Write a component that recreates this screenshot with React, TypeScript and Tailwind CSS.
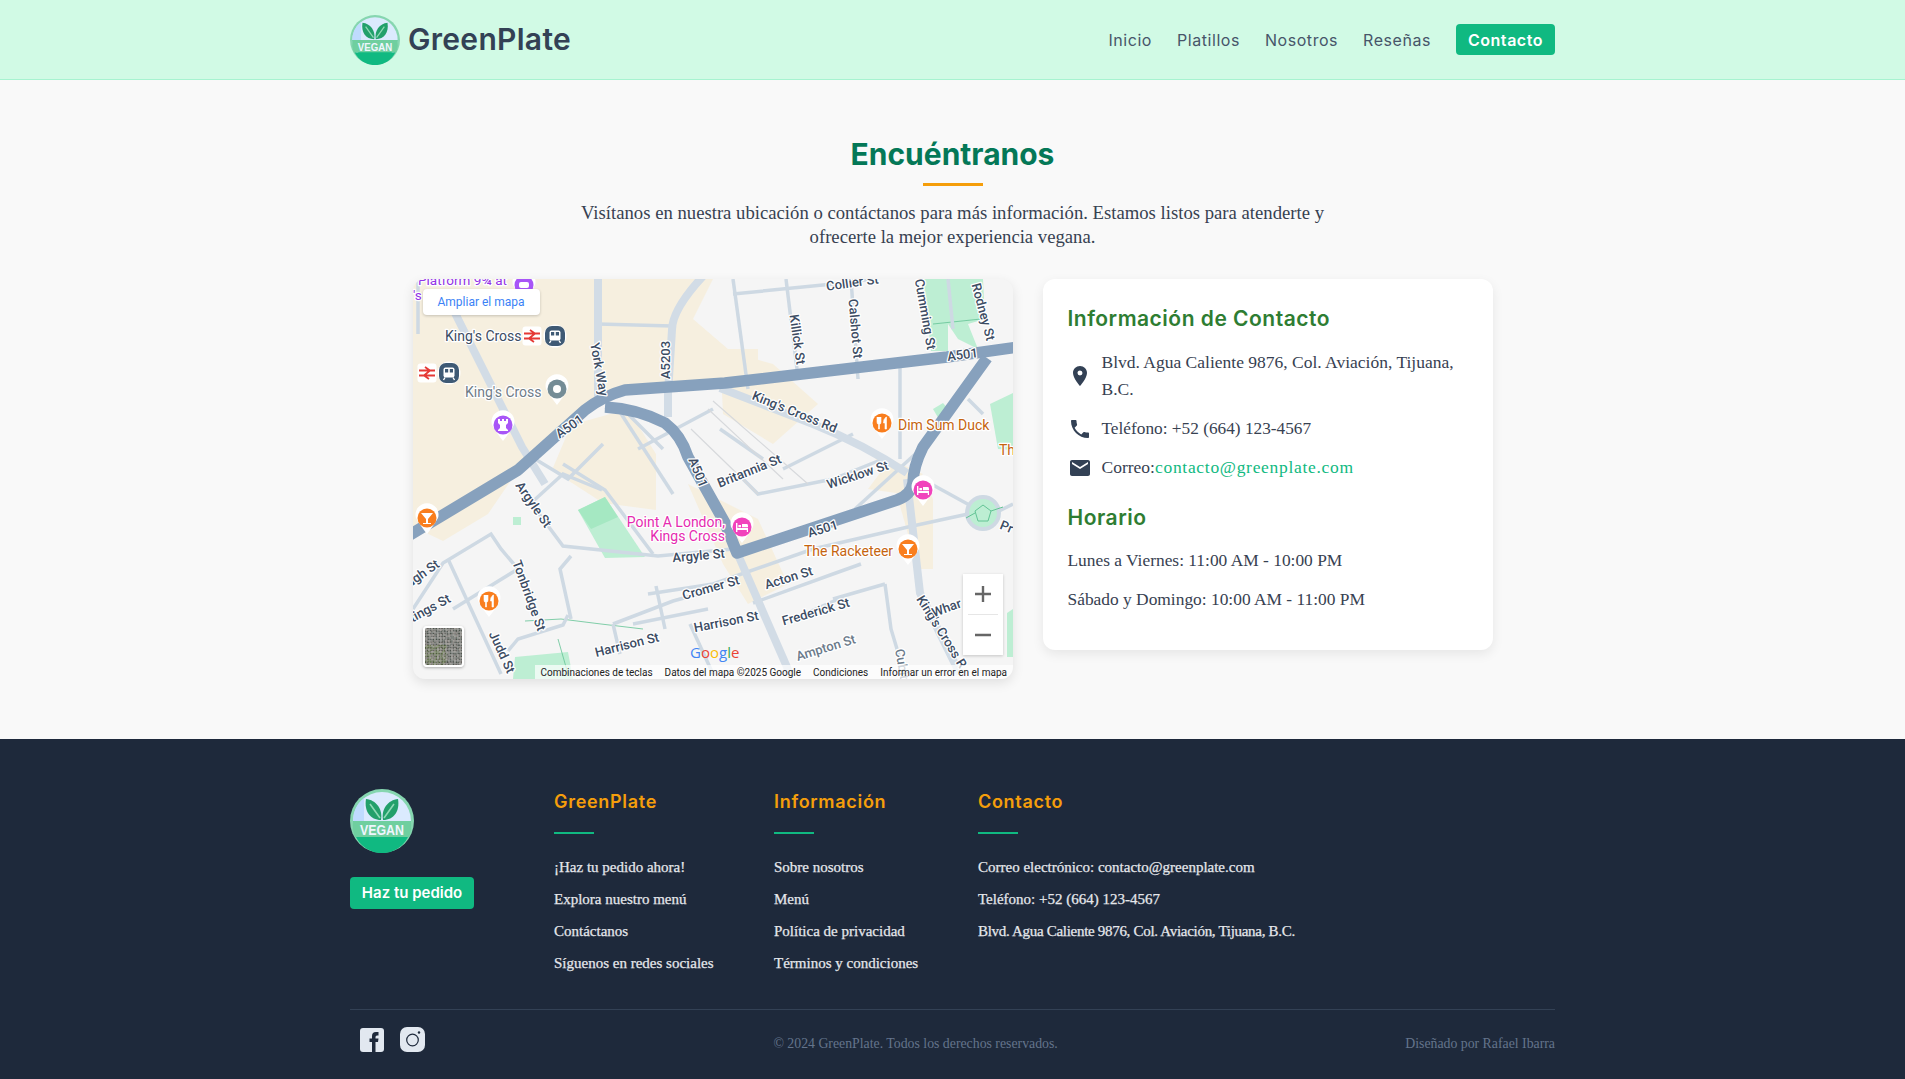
import { MdLocationOn, MdPhone, MdEmail } from 'react-icons/md'

const sans = "font-['Inter',sans-serif]"
const serif = "font-['Liberation_Serif',serif]"

const navLinks = ['Inicio', 'Platillos', 'Nosotros', 'Reseñas']

function VeganLogo({ size }: { size: number }) {
  return (
    <svg width={size} height={size} viewBox="0 0 64 64" className="shrink-0">
      <circle cx="32" cy="32" r="32" fill="#86d6b0" />
      <circle cx="32" cy="32" r="29" fill="#dbeafe" />
      <path d="M3 32 A29 29 0 0 1 14 9 L14 32 Z" fill="#bfdbfe" />
      <path d="M3.2 32 H60.8 A29 29 0 0 1 3.2 32 Z" fill="#10b981" />
      <path d="M3.2 32 H60.8 A29 29 0 0 1 59 48 H5 A29 29 0 0 1 3.2 32 Z" fill="#6fcf9f" />
      <path d="M6 48 H58 A29 29 0 0 1 6 48 Z" fill="#10b981" />
      <path d="M31 31 C20 31 14 22 16 10 C26 11 33 20 31 31 Z" fill="#22a06b" />
      <path d="M33 31 C44 31 50 22 48 10 C38 11 31 20 33 31 Z" fill="#22a06b" />
      <path d="M30 29 L20 15 M34 29 L44 15" stroke="#8ed9b5" strokeWidth="1.6" fill="none" />
      <text x="32" y="46" textAnchor="middle" fontSize="14" fontWeight="700" fill="#eff6ff" className="font-['Liberation_Sans',sans-serif]" textLength="44" lengthAdjust="spacingAndGlyphs">VEGAN</text>
    </svg>
  )
}

type Label = { t: string; x: number; y: number; r?: number; c?: string; s?: number; a?: 'start' | 'middle' | 'end' }

const labels: Label[] = [
  { t: 'York Way', x: 182, y: 91, r: 80 },
  { t: 'A5203', x: 257, y: 81, r: -90 },
  { t: 'A501', x: 159, y: 151, r: -35 },
  { t: 'A501', x: 281, y: 195, r: 68 },
  { t: 'Collier St', x: 440, y: 8, r: -8 },
  { t: 'Killick St', x: 380, y: 61, r: 82 },
  { t: 'Calshot St', x: 438, y: 50, r: 85 },
  { t: 'Cumming St', x: 508, y: 36, r: 80 },
  { t: 'Rodney St', x: 566, y: 34, r: 75 },
  { t: 'A501', x: 550, y: 80, r: -7 },
  { t: "King's Cross Rd", x: 380, y: 137, r: 22 },
  { t: 'Britannia St', x: 338, y: 196, r: -22 },
  { t: 'Wicklow St', x: 446, y: 200, r: -18 },
  { t: 'A501', x: 411, y: 254, r: -17 },
  { t: 'Argyle St', x: 286, y: 281, r: -5 },
  { t: 'Argyle St', x: 117, y: 228, r: 55 },
  { t: 'Tonbridge St', x: 112, y: 318, r: 70 },
  { t: 'Judd St', x: 85, y: 375, r: 65 },
  { t: 'ugh St', x: 12, y: 298, r: -35 },
  { t: 'tings St', x: 19, y: 333, r: -28 },
  { t: 'Cromer St', x: 299, y: 313, r: -16 },
  { t: 'Acton St', x: 377, y: 303, r: -17 },
  { t: 'Harrison St', x: 215, y: 370, r: -14 },
  { t: 'Harrison St', x: 314, y: 347, r: -11 },
  { t: 'Frederick St', x: 404, y: 337, r: -16 },
  { t: 'Ampton St', x: 414, y: 373, r: -17, c: '#6b7a8a' },
  { t: "King's Cross R", x: 525, y: 355, r: 58 },
  { t: 'Whar', x: 535, y: 333, r: -20 },
  { t: 'Cubitt', x: 485, y: 388, r: 80, c: '#6b7a8a' },
  { t: 'Pr', x: 592, y: 252, r: 22 },
  { t: "King's Cross", x: 32, y: 62, a: 'start', s: 14, c: '#3c4c63' },
  { t: "King's Cross", x: 52, y: 118, a: 'start', s: 14, c: '#6f7c88' },
  { t: 'Platform 9¾ at', x: 5, y: 6, a: 'start', s: 13.5, c: '#9334e6' },
  { t: "'s", x: 0, y: 21, a: 'start', s: 13.5, c: '#9334e6' },
  { t: 'Dim Sum Duck', x: 485, y: 151, a: 'start', s: 14, c: '#c5640f' },
  { t: 'Th', x: 586, y: 176, a: 'start', s: 14, c: '#c5640f' },
  { t: 'The Racketeer', x: 391, y: 277, a: 'start', s: 14, c: '#c5640f' },
  { t: 'Point A London,', x: 312, y: 248, a: 'end', s: 14, c: '#e52bb0' },
  { t: 'Kings Cross', x: 312, y: 262, a: 'end', s: 14, c: '#e52bb0' },
]

const motorway = [
  'M-5 257 L105 191 L172 131 Q190 117 212 111 L312 104 L534 78 L605 68',
  'M192 128 Q225 130 252 144 Q268 156 275 178 L312 244 L324 274 L484 221 Q498 216 500 204 Q500 188 510 168 L574 79',
]

const wideRoads = [
  'M307 109 L400 145 Q450 165 494 194',
  'M185 -5 L185 118',
  'M292 -5 Q259 30 259 51 L255 114 L255 138',
  'M40 30 L109 168 L132 205',
  'M494 200 L507 314 L547 395',
  'M326 278 L377 395',
]

const thinRoads = [
  'M5 0 L5 55', 'M0 330 L30 284 L78 255 L88 270 L105 290',
  'M35 280 L88 395', 'M105 290 L40 330', 'M115 220 L150 267 L245 277 L320 270',
  'M189 211 L150 195 L117 225', 'M150 185 L192 211 L240 275',
  'M235 315 L300 305 L400 270 L495 248 L555 235',
  'M200 345 L260 322 L300 311',
  'M200 345 L207 375', 'M155 336 L150 346 L105 360 L95 372',
  'M158 277 L147 290 L158 340', 'M243 307 L252 350', 'M277 345 L300 395',
  'M220 345 L295 330',
  'M340 324 L420 295 L448 285', 'M430 318 L380 340', 'M472 305 L478 350 L490 390',
  'M472 305 L420 320',
  'M185 45 L259 47', 'M320 0 L335 110', 'M320 15 L420 5 L460 0', 'M373 0 L384 90', 'M438 0 L445 100',
  'M442 230 L510 168', 'M535 0 L540 50', 'M487 80 L487 180',
  'M330 200 L345 215 L420 200 L470 180', 'M370 190 L440 155',
  'M350 180 L307 150', 'M500 195 L560 228', 'M250 170 L215 135 L192 128',
  'M205 130 L260 215', 'M225 170 L300 130', 'M122 180 L155 200 L190 165',
  'M555 120 L570 135', 'M570 240 L600 225',
]

const beige = [
  'M0 0 L300 0 L280 40 L315 70 L345 70 L345 104 L215 112 L172 131 L105 191 L10 250 L0 250 Z',
  'M5 250 L105 191 L75 235 L30 262 Z',
  'M158 146 L215 130 L243 175 L243 231 L190 224 L139 191 Z',
  'M307 70 L360 85 L405 125 L360 165 L310 135 Z',
  'M455 170 L510 195 L505 200 L490 215 L455 210 L470 190 Z',
  'M275 205 L345 240 L375 305 L335 325 L310 285 Z',
  'M505 190 L520 220 L520 290 L505 290 L485 220 Z',
]

const parks = [
  'M165 231 L192 218 L232 278 L192 279 Z',
  'M510 0 L570 0 L572 40 L555 45 L565 70 L545 60 L535 45 L535 72 L518 72 Z',
  'M577 125 L600 114 L600 171 L585 170 Z',
  'M100 238 L108 238 L108 246 L100 246 Z',
  'M520 130 L530 124 L537 132 L527 142 Z',
  'M102 378 L155 373 L160 400 L100 400 Z',
  'M594 334 L600 330 L600 378 L594 378 Z',
]

function Pin({ x, y, fill, kind }: { x: number; y: number; fill: string; kind: string }) {
  return (
    <g transform={`translate(${x} ${y})`}>
      <path d="M-11 0 A11.5 11.5 0 1 1 11 0 Q7 7 0 16 Q-7 7 -11 0 Z" fill="#fff" />
      <circle r="9.5" fill={fill} />
      {kind === 'cocktail' && <path d="M-6 -5 H6 L1 1 V5 H4 V6 H-4 V5 H-1 V1 Z" fill="#fff" />}
      {kind === 'food' && <path d="M-5 -6 V-1 Q-5 1 -3.5 1.5 V6 H-2.5 V1.5 Q-1 1 -1 -1 V-6 M-3 -6 V-1 M4 -6 Q1.5 -4 1.5 0 H3 V6 H4.5 V-6 Z" fill="#fff" stroke="#fff" strokeWidth=".6" />}
      {kind === 'hotel' && <path d="M-6 -4 H-4.6 V1 H6 V5 H4.8 V3 H-4.6 V5 H-6 Z M-3.6 -2 H-1 V0.2 H-3.6 Z M0 -3 H5 Q6 -3 6 -1 V0.2 H0 Z" fill="#fff" />}
      {kind === 'rook' && <path d="M-5 -6 H-3 V-4 H-1 V-6 H1 V-4 H3 V-6 H5 V-2 L3 0 V3 L5 5 V6 H-5 V5 L-3 3 V0 L-5 -2 Z" fill="#fff" />}
      {kind === 'dot' && <circle r="4" fill="#fff" />}
      {kind === 'game' && <rect x="-5" y="-3" width="10" height="6" rx="2" fill="#fff" />}
    </g>
  )
}

function Train({ x, y }: { x: number; y: number }) {
  return (
    <g transform={`translate(${x} ${y})`}>
      <circle r="11.5" fill="#fff" />
      <rect x="-10" y="-10" width="20" height="20" rx="7" fill="#3f5a75" />
      <rect x="-5.5" y="-5.5" width="11" height="10" rx="2" fill="#fff" />
      <rect x="-4" y="-4" width="3.2" height="3.5" fill="#3f5a75" />
      <rect x=".8" y="-4" width="3.2" height="3.5" fill="#3f5a75" />
      <path d="M-4 4.5 L-5.5 7 M4 4.5 L5.5 7" stroke="#fff" strokeWidth="1.4" />
    </g>
  )
}

function Rail({ x, y }: { x: number; y: number }) {
  return (
    <g transform={`translate(${x} ${y})`}>
      <rect x="-9.5" y="-9.5" width="19" height="19" rx="3" fill="#fff" />
      <path d="M-8 -2.5 H8 M-8 2.5 H8 M-2 -6 L3 -2.5 L-3 2.5 L2 6" stroke="#e53935" strokeWidth="1.8" fill="none" />
    </g>
  )
}

// Tile thumbnail for the satellite toggle
const satTiles = Array.from({ length: 576 }, (_, i) => {
  const n = (i * 37 + ((i * i) % 23) * 11) % 5
  const col = i % 24
  const row = Math.floor(i / 24)
  const green = row > 10 && col < 14 && n < 3
  return {
    x: col * 1.5,
    y: row * 1.5,
    fill: green ? ['#5e6b4a', '#6d7a56', '#4f5b40'][n] : ['#5f6460', '#7a7d78', '#4c524b', '#6a6662', '#8d8a84'][n],
  }
})

function MapPanel() {
  return (
    <div className="relative w-[600px] h-[400px] shrink-0 rounded-xl overflow-hidden bg-[#f5f5f5] shadow-[0_4px_12px_rgba(0,0,0,0.1)]">
      <svg width="600" height="400" viewBox="0 0 600 400" className="block font-['Roboto',sans-serif]">
        {beige.map((d, i) => <path key={i} d={d} fill="#f6efdf" />)}
        {parks.map((d, i) => <path key={i} d={d} fill="#bdeed3" />)}
        <path d="M165 231 L192 218 L205 238 L178 250 Z" fill="#a5e8c2" />
        <path d="M112 342 L148 340 L188 345 L230 350 M520 45 L568 40 M535 0 L540 45 M155 395 L145 360" stroke="#62c394" strokeWidth=".8" fill="none" />
        {thinRoads.map((d, i) => <path key={i} d={d} stroke="#ced9e3" strokeWidth="3.5" fill="none" />)}
        {wideRoads.map((d, i) => <path key={i} d={d} stroke="#d2dce6" strokeWidth="8" fill="none" strokeLinejoin="round" />)}
        <path d="M278 150 L345 215 M295 130 L370 200 M300 122 L395 205" stroke="#d7d9dc" strokeWidth="1.2" fill="none" />
        {motorway.map((d, i) => <path key={i} d={d} stroke="#87a1bd" strokeWidth="11.5" fill="none" strokeLinejoin="round" />)}
        <circle cx="570" cy="234" r="16" fill="#bdeed3" stroke="#ced9e3" strokeWidth="4" />
        <path d="M570 226 L578 232 L575 242 L565 242 L562 232 Z M553 239 L562 234 M578 232 L590 228" stroke="#62c394" strokeWidth="1" fill="none" />

        {labels.map((l, i) => (
          <text
            key={i}
            x={l.r === undefined ? l.x : 0}
            y={l.r === undefined ? l.y : 0}
            transform={l.r === undefined ? undefined : `translate(${l.x} ${l.y}) rotate(${l.r})`}
            textAnchor={l.a ?? 'middle'}
            fontSize={l.s ?? 13}
            fontWeight={l.s ? 400 : 500}
            fill={l.c ?? '#3c4c63'}
            stroke="#fff"
            strokeWidth="2.5"
            paintOrder="stroke"
            strokeLinejoin="round"
          >
            {l.t}
          </text>
        ))}

        <Pin x={111} y={6} fill="#a855f7" kind="game" />
        <Pin x={14} y={239} fill="#f97e1e" kind="cocktail" />
        <Pin x={76} y={322} fill="#f97e1e" kind="food" />
        <Pin x={90} y={146} fill="#a855f7" kind="rook" />
        <Pin x={144} y={110} fill="#748c96" kind="dot" />
        <Pin x={469} y={144} fill="#f97e1e" kind="food" />
        <Pin x={495} y={270} fill="#f97e1e" kind="cocktail" />
        <Pin x={329} y={248} fill="#f143bc" kind="hotel" />
        <Pin x={510} y={211} fill="#f143bc" kind="hotel" />
        <Train x={142} y={57} />
        <Rail x={119} y={57} />
        <Train x={36} y={94} />
        <Rail x={14} y={94} />

        <text x="277" y="379" fontSize="15" fontWeight="500" className="font-['Open_Sans',sans-serif]">
          <tspan fill="#4285f4">G</tspan><tspan fill="#ea4335">o</tspan><tspan fill="#fbbc05">o</tspan><tspan fill="#4285f4">g</tspan><tspan fill="#34a853">l</tspan><tspan fill="#ea4335">e</tspan>
        </text>
      </svg>

      <div className="absolute left-[10px] top-[10px] w-[117px] h-[26px] bg-white rounded-sm shadow-[0_1px_3px_rgba(0,0,0,0.2)] flex items-center justify-center text-[12px] text-[#3b82f6] font-['Roboto',sans-serif]">
        Ampliar el mapa
      </div>

      <div className="absolute left-[10px] top-[347px] w-[41px] h-[41px] border-2 border-white rounded-sm overflow-hidden shadow-[0_1px_3px_rgba(0,0,0,0.3)]">
        <svg width="37" height="37" viewBox="0 0 36 36" className="block">
          {satTiles.map((t, i) => <rect key={i} x={t.x} y={t.y} width="1.5" height="1.5" fill={t.fill} />)}
        </svg>
      </div>

      <div className="absolute left-[550px] top-[295px] w-[40px] h-[81px] bg-white shadow-[0_1px_3px_rgba(0,0,0,0.2)] flex flex-col items-center">
        <div className="h-[40px] flex items-center justify-center">
          <svg width="18" height="18" viewBox="0 0 18 18"><path d="M9 1 V17 M1 9 H17" stroke="#666" strokeWidth="2.4" /></svg>
        </div>
        <div className="w-[30px] h-px bg-[#e6e6e6]" />
        <div className="h-[40px] flex items-center justify-center">
          <svg width="18" height="18" viewBox="0 0 18 18"><path d="M1 9 H17" stroke="#666" strokeWidth="2.4" /></svg>
        </div>
      </div>

      <div className="absolute left-[122px] right-0 bottom-0 h-[14px] bg-white/70 flex items-center pl-[6px] gap-[12px] text-[10px] text-[#222] font-['Roboto',sans-serif] whitespace-nowrap">
        <span>Combinaciones de teclas</span>
        <span>Datos del mapa ©2025 Google</span>
        <span>Condiciones</span>
        <span>Informar un error en el mapa</span>
      </div>
    </div>
  )
}

function ContactCard() {
  return (
    <div className={`w-[450px] h-[371px] bg-white rounded-xl shadow-[0_4px_12px_rgba(0,0,0,0.08)] pt-[25px] px-[25px] text-[#374151] ${serif}`}>
      <h3 className={`text-[21px] leading-[30px] font-semibold tracking-[0.5px] text-[#2e7d32] ${sans}`}>Información de Contacto</h3>
      <div className="mt-[15px] flex items-center gap-[10px]">
        <MdLocationOn className="w-6 h-6 shrink-0 text-[#334155]" />
        <p className="text-[17.5px] leading-[27px]">Blvd. Agua Caliente 9876, Col. Aviación, Tijuana, B.C.</p>
      </div>
      <div className="mt-[12px] flex items-center gap-[10px] h-[27px]">
        <MdPhone className="w-6 h-6 shrink-0 text-[#334155]" />
        <p className="text-[17.3px]">Teléfono: +52 (664) 123-4567</p>
      </div>
      <div className="mt-[12px] flex items-center gap-[10px] h-[27px]">
        <MdEmail className="w-6 h-6 shrink-0 text-[#334155]" />
        <p className="text-[17.5px]">Correo:<span className="text-[#10b981] tracking-[0.7px]">contacto@greenplate.com</span></p>
      </div>
      <h3 className={`mt-[22px] text-[21px] leading-[30px] font-semibold tracking-[0.5px] text-[#2e7d32] ${sans}`}>Horario</h3>
      <p className="mt-[14px] text-[17.4px] leading-[27px]">Lunes a Viernes: 11:00 AM - 10:00 PM</p>
      <p className="mt-[12px] text-[17.4px] leading-[27px]">Sábado y Domingo: 10:00 AM - 11:00 PM</p>
    </div>
  )
}

function FooterColumn({ title, links, className }: { title: string; links: string[]; className: string }) {
  return (
    <div className={className}>
      <h4 className={`text-[18px] leading-[26px] font-semibold tracking-[0.7px] text-[#f59e0b] ${sans}`}>{title}</h4>
      <div className="mt-[17px] w-[40px] h-[2px] bg-[#10b981]" />
      <ul className="mt-[22px] flex flex-col gap-[10px]">
        {links.map(l => (
          <li
            key={l}
            className={`text-[15px] leading-[22px] text-[#e5e7eb] [-webkit-text-stroke:0.25px_#e5e7eb] ${l.startsWith('Blvd') ? 'tracking-[-0.3px]' : ''}`}
          >
            {l}
          </li>
        ))}
      </ul>
    </div>
  )
}

export default function App() {
  return (
    <div className="min-h-[1079px] bg-[#f9f9f9] flex flex-col">
      <header className="h-[80px] bg-[#d1fae5] border-b border-[#a7f3d0] shrink-0">
        <div className="w-[1205px] h-full mx-auto flex items-center justify-between">
          <div className="flex items-center gap-[8px]">
            <VeganLogo size={50} />
            <span className={`text-[30px] font-semibold tracking-[0.3px] text-[#334155] ${sans}`}>GreenPlate</span>
          </div>
          <nav className={`flex items-center gap-[25px] text-[16px] tracking-[0.55px] text-[#475569] ${sans}`}>
            {navLinks.map(l => <a key={l}>{l}</a>)}
            <a className="h-[31px] w-[99px] flex items-center justify-center rounded bg-[#10b981] text-white font-semibold">Contacto</a>
          </nav>
        </div>
      </header>

      <main className="flex-1 pt-[53px] pb-[60px]">
        <h2 className={`text-center text-[30px] leading-[42px] font-bold text-[#047857] ${sans}`}>Encuéntranos</h2>
        <div className="mx-auto mt-[8px] w-[60px] h-[3px] bg-[#f59e0b]" />
        <p className={`mx-auto mt-[15px] w-[800px] text-center text-[18.7px] leading-[24px] text-[#374151] ${serif}`}>
          Visítanos en nuestra ubicación o contáctanos para más información. Estamos listos para atenderte y<br />
          ofrecerte la mejor experiencia vegana.
        </p>
        <div className="mt-[30px] flex justify-center gap-[30px] items-start">
          <MapPanel />
          <ContactCard />
        </div>
      </main>

      <footer className="h-[340px] bg-[#1e293b] shrink-0 pt-[50px]">
        <div className="w-[1205px] mx-auto">
          <div className={`flex h-[220px] ${serif}`}>
            <div className="w-[204px]">
              <VeganLogo size={64} />
              <a className={`mt-[24px] w-[124px] h-[32px] flex items-center justify-center rounded bg-[#10b981] text-white text-[15px] font-semibold ${sans}`}>Haz tu pedido</a>
            </div>
            <FooterColumn className="w-[220px]" title="GreenPlate" links={['¡Haz tu pedido ahora!', 'Explora nuestro menú', 'Contáctanos', 'Síguenos en redes sociales']} />
            <FooterColumn className="w-[204px]" title="Información" links={['Sobre nosotros', 'Menú', 'Política de privacidad', 'Términos y condiciones']} />
            <FooterColumn className="flex-1" title="Contacto" links={['Correo electrónico: contacto@greenplate.com', 'Teléfono: +52 (664) 123-4567', 'Blvd. Agua Caliente 9876, Col. Aviación, Tijuana, B.C.']} />
          </div>
          <div className={`border-t border-[#334155] pt-[15px] flex justify-between text-[13.8px] text-[#64748b] ${serif}`}>
            <div className="w-[76px] flex items-center gap-[16px] pl-[10px]">
              <svg width="24" height="24" viewBox="0 0 24 24" className="shrink-0">
                <rect width="24" height="24" rx="3" fill="#e2e8f0" />
                <path d="M12 24 V14 H9.5 V10.5 H12 V8 Q12 4 16 4 H18.5 V7.5 H17 Q15.5 7.5 15.5 9 V10.5 H18.5 L18 14 H15.5 V24 Z" fill="#1e293b" />
              </svg>
              <svg width="25" height="25" viewBox="0 0 25 25" className="shrink-0">
                <rect width="25" height="25" rx="7" fill="#e2e8f0" />
                <circle cx="12.5" cy="13" r="5.8" fill="none" stroke="#1e293b" strokeWidth="1.2" />
                <circle cx="19" cy="5.5" r="1.2" fill="#1e293b" />
              </svg>
            </div>
            <p className="pt-[9px]">© 2024 GreenPlate. Todos los derechos reservados.</p>
            <p className="pt-[9px]">Diseñado por Rafael Ibarra</p>
          </div>
        </div>
      </footer>
    </div>
  )
}
